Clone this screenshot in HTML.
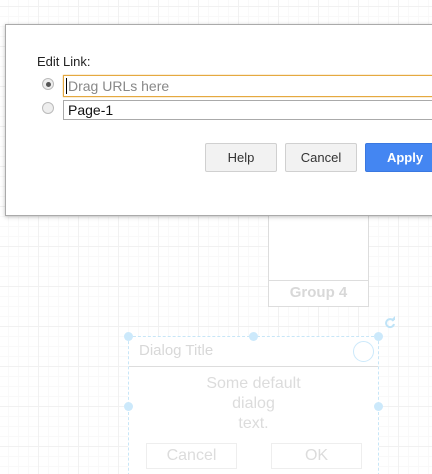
<!DOCTYPE html>
<html style="width:432px;height:474px;overflow:hidden"><head><style>
body{margin:0;width:432px;height:474px;overflow:hidden;position:relative;background:#fff;font-family:"Liberation Sans",Arial,sans-serif;
background-image:linear-gradient(#f1f1f1 1px,transparent 1px),linear-gradient(90deg,#f1f1f1 1px,transparent 1px),linear-gradient(#f9f9f9 1px,transparent 1px),linear-gradient(90deg,#f9f9f9 1px,transparent 1px);
background-size:40px 40px,40px 40px,10px 10px,10px 10px;background-position:38px 6px,38px 6px,38px 6px,38px 6px;}
.a{position:absolute;box-sizing:border-box}
.h{position:absolute;width:9px;height:9px;border-radius:50%;background:#cce9fb;margin:-4px 0 0 -4px}
.btn{position:absolute;top:143px;height:29px;border:1px solid #d0d0d0;border-radius:2px;background:#f2f2f2;font-size:13px;color:#333;text-align:center;line-height:27px;box-sizing:border-box}
</style></head><body>
<div class="a" style="left:268px;top:200px;width:101px;height:107px;border:1px solid #ddd;background:#fff"></div>
<div class="a" style="left:268px;top:280px;width:101px;height:1px;background:#ddd"></div>
<div class="a" style="left:268px;top:284px;width:101px;text-align:center;font-weight:bold;font-size:15px;color:#d8d8d8">Group 4</div>

<div class="a" style="left:128px;top:336px;width:251px;height:150px;border:1px dashed #c8e6f7;border-bottom:none;background:#fff"></div>
<div class="a" style="left:129px;top:366px;width:249px;height:1px;background:#ddd"></div>
<div class="a" style="left:139px;top:342px;font-size:15px;color:#d8d8d8">Dialog Title</div>
<div class="a" style="left:353px;top:341px;width:21px;height:21px;border:1px solid #cce9fb;border-radius:50%"></div>
<div class="a" style="left:128px;top:374px;width:251px;text-align:center;font-size:16px;line-height:20px;color:#dcdcdc">Some default<br>dialog<br>text.</div>
<div class="a" style="left:146px;top:443px;width:91px;height:26px;border:1px solid #eee;text-align:center;line-height:24px;font-size:16px;color:#dcdcdc">Cancel</div>
<div class="a" style="left:271px;top:443px;width:91px;height:26px;border:1px solid #eee;text-align:center;line-height:24px;font-size:16px;color:#dcdcdc">OK</div>
<div class="h" style="left:128px;top:336px"></div><div class="h" style="left:253px;top:336px"></div><div class="h" style="left:378px;top:336px"></div>
<div class="h" style="left:128px;top:406px"></div><div class="h" style="left:378px;top:406px"></div>
<svg class="a" style="left:383px;top:316px" width="14" height="14" viewBox="0 0 14 14"><path d="M10.5 5A4 4 0 1 0 11 8" fill="none" stroke="#bfe3f7" stroke-width="2"/><path d="M8 4h4V0z" fill="#bfe3f7"/></svg>

<div class="a" style="left:5px;top:24px;width:440px;height:192px;border:1px solid #aaa;background:#fff;box-shadow:0 1px 4px rgba(0,0,0,.25)"></div>
<div class="a" style="left:37px;top:54px;font-size:13px;color:#222">Edit Link:</div>
<div class="a" style="left:42px;top:78px;width:12px;height:12px;border-radius:50%;border:1px solid #bbb;background:#eee"></div>
<div class="a" style="left:46px;top:82px;width:5px;height:5px;border-radius:50%;background:#555"></div>
<div class="a" style="left:42px;top:102px;width:12px;height:12px;border-radius:50%;border:1px solid #bbb;background:#eee"></div>
<div class="a" style="left:63px;top:75px;width:380px;height:22px;border:1px solid #e5a940;box-shadow:0 0 1px #e5a940;font-size:14px;color:#888;line-height:20px;padding-left:2px"><span style="border-left:1px solid #000;padding-left:1px">Drag URLs here</span></div>
<div class="a" style="left:63px;top:100px;width:380px;height:20px;border:1px solid #aaa;font-size:14px;color:#111;line-height:18px;padding-left:4px">Page-1</div>
<div class="btn" style="left:205px;width:72px">Help</div>
<div class="btn" style="left:285px;width:72px">Cancel</div>
<div class="btn" style="left:365px;width:80px;background:#4486f2;border-color:#3a78e0;color:#fff;font-weight:bold">Apply</div>
</body></html>
